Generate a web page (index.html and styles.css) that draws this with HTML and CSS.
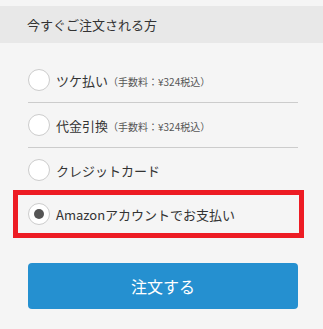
FILE: index.html
```html
<!DOCTYPE html>
<html lang="ja">
<head>
<meta charset="utf-8">
<title>今すぐご注文される方</title>
<link rel="stylesheet" href="styles.css">
</head>
<body>
  <div class="page">
    <div class="heading">今すぐご注文される方</div>
    <ul class="options">
      <li class="option divided">
        <span class="radio"></span>
        <span class="label">ツケ払い<small class="fee">（手数料：¥324税込）</small></span>
      </li>
      <li class="option divided">
        <span class="radio"></span>
        <span class="label">代金引換<small class="fee">（手数料：¥324税込）</small></span>
      </li>
      <li class="option">
        <span class="radio"></span>
        <span class="label">クレジットカード</span>
      </li>
      <li class="option selected">
        <span class="highlight"></span>
        <span class="radio checked"></span>
        <span class="label">Amazonアカウントでお支払い</span>
      </li>
    </ul>
    <button class="order-btn" type="button">注文する</button>
  </div>
</body>
</html>
```

FILE: styles.css
```css
* { box-sizing: border-box; }

html, body {
  margin: 0;
  padding: 0;
  background: #f5f5f5;
}

body {
  font-family: "Noto Sans CJK JP", "Noto Sans", sans-serif;
  color: #333;
}

.page {
  padding-top: 6px;
}

.heading {
  height: 37px;
  background: #e8e8e8;
  padding-left: 27px;
  font-size: 13px;
  line-height: 37px;
  color: #333;
}

.options {
  list-style: none;
  margin: 15px 25px 0 28px;
  padding: 0;
}

.option {
  height: 44px;
  display: flex;
  align-items: center;
}

.option.divided {
  height: 45px;
  border-bottom: 1px solid #cccccc;
}

.option.selected {
  position: relative;
}

.highlight {
  position: absolute;
  left: -15px;
  top: -2px;
  width: 291px;
  height: 48px;
  border: 5px solid #ed1c24;
}

.radio {
  width: 22px;
  height: 22px;
  flex: none;
  border: 1px solid #cccccc;
  border-radius: 50%;
  background: #ffffff;
  display: flex;
  align-items: center;
  justify-content: center;
}

.radio.checked::after {
  content: "";
  width: 10px;
  height: 10px;
  border-radius: 50%;
  background: #555555;
}

.label {
  margin-left: 6px;
  font-size: 13px;
  color: #333;
  white-space: nowrap;
}

.fee {
  font-size: 10px;
  color: #555;
}

.order-btn {
  display: block;
  width: 270px;
  height: 46px;
  margin: 27px 0 0 28px;
  border: none;
  border-radius: 4px;
  background: #2590d0;
  color: #ffffff;
  font-family: "Noto Sans CJK JP", "Noto Sans", sans-serif;
  font-size: 16px;
  padding: 0;
}
```
